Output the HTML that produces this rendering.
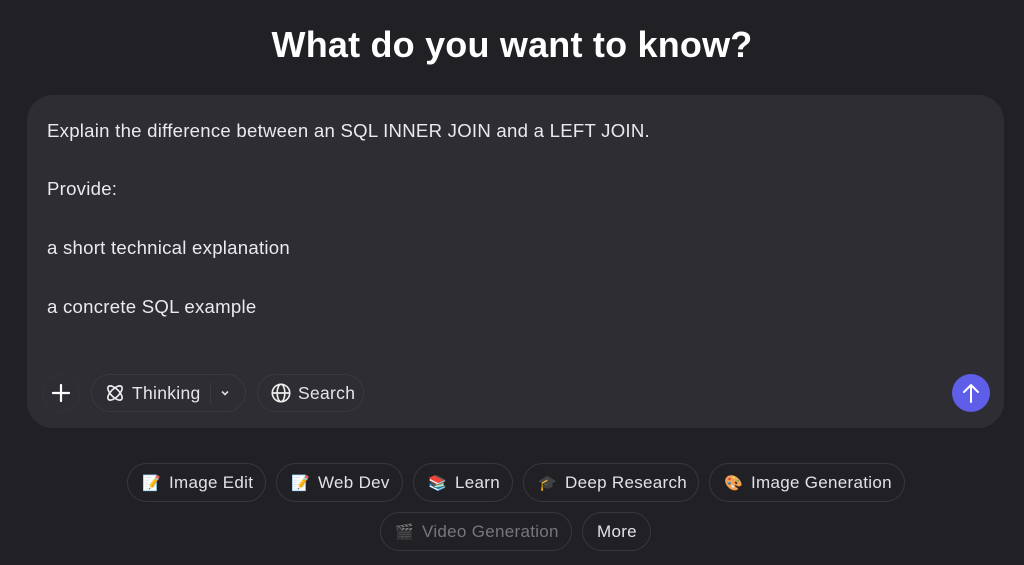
<!DOCTYPE html>
<html><head><meta charset="utf-8"><style>
*{margin:0;padding:0;box-sizing:border-box}
body{width:1024px;height:565px;background:#212025;font-family:"Liberation Sans","Noto Sans CJK SC",sans-serif;color:#ececf0;position:relative;overflow:hidden}
h1{position:absolute;top:24px;left:0;width:1024px;text-align:center;font-size:36px;font-weight:bold;color:#fff;letter-spacing:0.2px}
.box{position:absolute;left:27px;top:95px;width:977px;height:333px;background:#2e2d33;border-radius:26px}
.txt{position:absolute;left:47px;font-size:18.6px;letter-spacing:0.25px;color:#eaeaee}
.pill{position:absolute;height:38px;border:1px solid #3a393f;border-radius:19px;display:flex;align-items:center;font-size:17.5px;letter-spacing:0.3px;color:#e6e6ea}
.chip{position:absolute;height:39px;border:1px solid #38373d;border-radius:20px;display:flex;align-items:center;font-size:17px;letter-spacing:0.3px;color:#e2e2e6;padding-left:14px}
.em{font-size:15px;margin-right:9px;width:18px}
.send{position:absolute;left:952px;top:374px;width:38px;height:38px;border-radius:50%;background:#5e5ee8}
</style></head><body>
<h1>What do you want to know?</h1>
<div class="box"></div>
<div class="txt" style="top:120px">Explain the difference between an SQL INNER JOIN and a LEFT JOIN.</div>
<div class="txt" style="top:178px">Provide:</div>
<div class="txt" style="top:237px">a short technical explanation</div>
<div class="txt" style="top:296px">a concrete SQL example</div>
<div class="pill" style="left:42px;top:374px;width:38px;justify-content:center;border-color:#333238">
<svg width="20" height="20" viewBox="0 0 20 20"><path d="M10 2v16M2 10h16" stroke="#fff" stroke-width="2.2" stroke-linecap="round"/></svg></div>
<div class="pill" style="left:91px;top:374px;width:155px;padding-left:12px">
<svg width="22" height="22" viewBox="0 0 24 24" fill="none" stroke="#eee" stroke-width="1.8"><ellipse cx="12" cy="12" rx="10" ry="4.5" transform="rotate(45 12 12)"/><ellipse cx="12" cy="12" rx="10" ry="4.5" transform="rotate(-45 12 12)"/></svg>
<span style="margin-left:6px">Thinking</span><span style="margin-left:9px;width:1px;height:22px;background:#3a393f"></span>
<svg style="margin-left:8px" width="12" height="12" viewBox="0 0 12 12"><path d="M3 4.5l3 3 3-3" stroke="#ddd" stroke-width="1.6" fill="none"/></svg></div>
<div class="pill" style="left:257px;top:374px;width:107px;padding-left:12px">
<svg width="22" height="22" viewBox="0 0 24 24" fill="none" stroke="#eee" stroke-width="1.8"><circle cx="12" cy="12" r="9.5"/><ellipse cx="12" cy="12" rx="4.2" ry="9.5"/><path d="M2.5 12h19"/></svg>
<span style="margin-left:6px">Search</span></div>
<div class="send"><svg width="38" height="38" viewBox="0 0 38 38"><path d="M19 28V11M12 18l7-7 7 7" stroke="#fff" stroke-width="2" fill="none" stroke-linecap="round" stroke-linejoin="round"/></svg></div>
<div class="chip" style="left:127px;top:463px;width:139px"><span class="em">📝</span>Image Edit</div>
<div class="chip" style="left:276px;top:463px;width:127px"><span class="em">📝</span>Web Dev</div>
<div class="chip" style="left:413px;top:463px;width:100px"><span class="em">📚</span>Learn</div>
<div class="chip" style="left:523px;top:463px;width:176px"><span class="em">🎓</span>Deep Research</div>
<div class="chip" style="left:709px;top:463px;width:196px"><span class="em">🎨</span>Image Generation</div>
<div class="chip" style="left:380px;top:512px;width:192px;color:#77767c"><span class="em" style="opacity:.5">🎬</span>Video Generation</div>
<div class="chip" style="left:582px;top:512px;width:69px">More</div>
</body></html>
